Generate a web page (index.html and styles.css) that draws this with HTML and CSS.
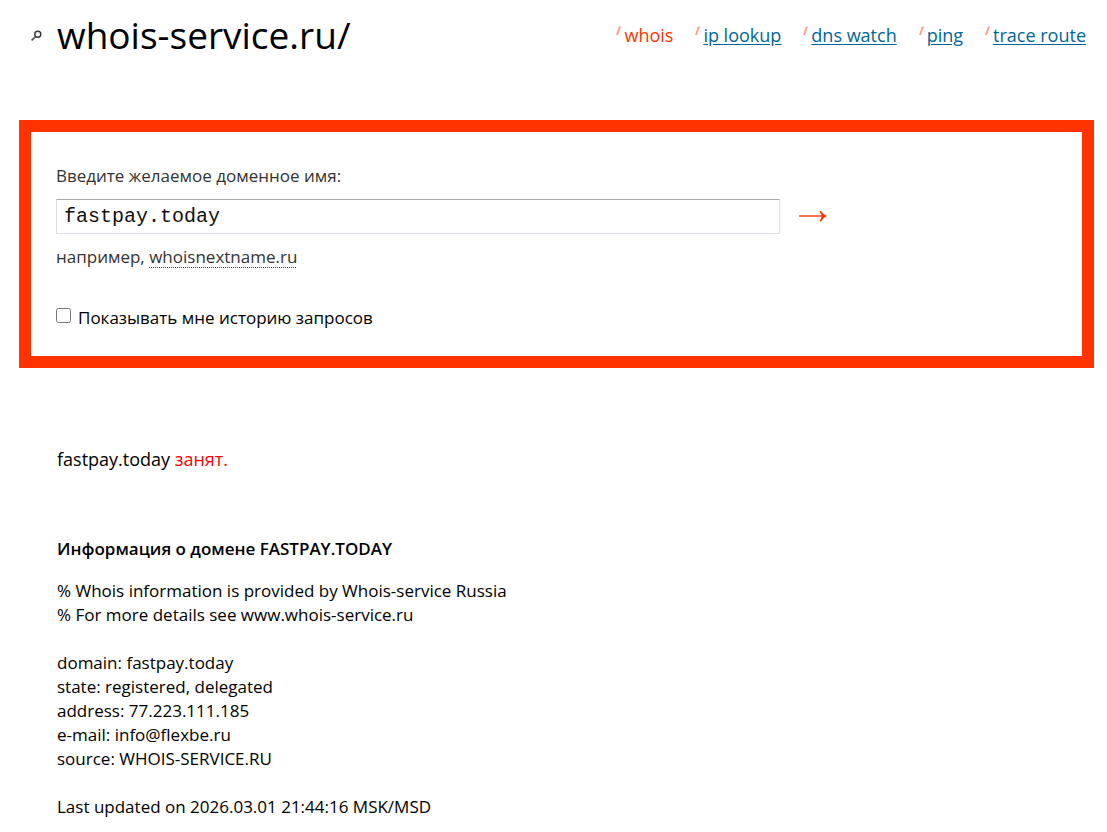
FILE: index.html
```html
<!DOCTYPE html>
<html lang="ru">
<head>
    <meta charset="UTF-8">
    <meta name="viewport" content="width=device-width, initial-scale=1.0">
    <title>whois-service.ru</title>
    <link rel="stylesheet" href="styles.css">
</head>
<body>
    <header class="header">
        <svg class="logo-icon" viewBox="0 0 11 11" aria-hidden="true">
            <circle cx="6.8" cy="4.2" r="3" fill="none" stroke="#333" stroke-width="1.4"/>
            <path d="M4.6 6.6 L0.6 10.4" stroke="#555" stroke-width="1.7"/>
        </svg>
        <h1>whois-service.ru/</h1>
        <nav class="menu">
            <span class="menu-item"><svg class="slash" viewBox="0 0 5 10" aria-hidden="true"><path d="M4 0.5 L1 9"/></svg><span class="current">whois</span></span>
            <span class="menu-item"><svg class="slash" viewBox="0 0 5 10" aria-hidden="true"><path d="M4 0.5 L1 9"/></svg><a href="#">ip lookup</a></span>
            <span class="menu-item"><svg class="slash" viewBox="0 0 5 10" aria-hidden="true"><path d="M4 0.5 L1 9"/></svg><a href="#">dns watch</a></span>
            <span class="menu-item"><svg class="slash" viewBox="0 0 5 10" aria-hidden="true"><path d="M4 0.5 L1 9"/></svg><a href="#">ping</a></span>
            <span class="menu-item"><svg class="slash" viewBox="0 0 5 10" aria-hidden="true"><path d="M4 0.5 L1 9"/></svg><a href="#">trace route</a></span>
        </nav>
    </header>

    <!-- Search form -->
    <form class="search">
        <label class="search-label" for="domain">Введите желаемое доменное имя:</label>
        <div class="search-row">
            <input type="text" id="domain" name="domain" value="fastpay.today">
            <button type="submit" aria-label="Проверить">
                <svg viewBox="0 0 28 12" aria-hidden="true">
                    <path d="M0 5 H25" stroke="#ff3300" stroke-width="1.4"/>
                    <path d="M20.5 0 L22 0 Q24 3.5 28 5 Q24 6.5 22 10.5 L20.5 10.5 Q22 7 23 5 Q22 3 20.5 0 Z" fill="#ff3300"/>
                </svg>
            </button>
        </div>
        <p class="example">например, <a href="#">whoisnextname.ru</a></p>
        <div class="history">
            <input type="checkbox" id="history">
            <label for="history">Показывать мне историю запросов</label>
        </div>
    </form>

    <!-- Result -->
    <main class="result">
        <p class="status">fastpay.today <span>занят.</span></p>
        <h2>Информация о домене FASTPAY.TODAY</h2>
        <p>% Whois information is provided by Whois-service Russia<br>
        % For more details see www.whois-service.ru</p>
        <p>domain: fastpay.today<br>
        state: registered, delegated<br>
        address: 77.223.111.185<br>
        e-mail: info@flexbe.ru<br>
        source: WHOIS-SERVICE.RU</p>
        <p>Last updated on 2026.03.01 21:44:16 MSK/MSD</p>
    </main>
</body>
</html>
```
FILE: styles.css
```css
body {
    margin: 0;
    padding: 11px 13px 0 19px;
    background: #fff;
    color: #000;
    font-family: 'Trebuchet MS', 'Open Sans', sans-serif;
    font-size: 17px;
    line-height: 24px;
}

h1, h2, p {
    margin: 0;
}

/* Header */
.header {
    display: flex;
    align-items: center;
    padding: 0 8px 0 12px;
    margin-bottom: 61px;
}

.logo-icon {
    width: 11px;
    height: 11px;
    margin-right: 15px;
}

h1 {
    font-size: 37px;
    font-weight: normal;
    line-height: 48px;
}

.menu {
    display: flex;
    gap: 22px;
    margin-left: auto;
    font-size: 18px;
}

.menu-item {
    display: flex;
}

.slash {
    width: 5px;
    height: 10px;
    margin: 3px 3px 0 0;
    fill: none;
    stroke: #ffa08c;
    stroke-width: 2;
}

.menu a {
    color: #006699;
    text-underline-offset: 2px;
}

.menu .current {
    color: #ff3300;
}

/* Search form */
.search {
    padding: 32px 25px 26px;
    border: 12px solid #ff3300;
    color: #333;
}

.search-label {
    display: block;
    margin-bottom: 11px;
}

.search-row {
    display: flex;
    align-items: center;
    margin-bottom: 11px;
}

.search-row input {
    box-sizing: border-box;
    flex: 1;
    min-width: 0;
    height: 35px;
    padding: 0 7px;
    border: 1px solid #e0e0e8;
    border-top-color: #aaa;
    background: #fff;
    color: #111;
    font-family: 'Courier New', 'Liberation Mono', monospace;
    font-size: 20px;
}

.search-row button {
    display: flex;
    margin: 0 23% 0 19px;
    padding: 0;
    border: 0;
    background: none;
    cursor: pointer;
}

.search-row svg {
    width: 28px;
    height: 12px;
}

.example {
    margin-bottom: 37px;
}

.example a {
    color: #333;
    text-decoration: underline dotted 1px;
    text-underline-offset: 4px;
    text-decoration-skip-ink: none;
}

.history {
    display: flex;
    align-items: center;
    color: #000;
}

.history input {
    width: 15px;
    height: 15px;
    margin: 0 7px 6px 0;
}

/* Result */
.result {
    padding: 79px 38px 0;
}

.result p {
    margin-bottom: 24px;
}

.result .status {
    margin-bottom: 66px;
    font-size: 18px;
}

.status span {
    color: #ff0000;
}

h2 {
    margin-bottom: 18px;
    font-size: 17px;
    font-weight: 600;
}

.result p:last-child {
    margin-bottom: 0;
}
```
